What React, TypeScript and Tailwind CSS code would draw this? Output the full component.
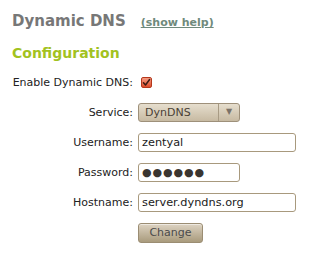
import React from "react";

const font = { fontFamily: '"DejaVu Sans", Verdana, sans-serif' };

function Label({ children }: { children: React.ReactNode }) {
  return (
    <div className="text-right text-[11px] leading-[19px] text-[#222] whitespace-nowrap">{children}</div>
  );
}

export default function App() {
  return (
    <div className="w-[334px] h-[275px] bg-white pt-[11px] pl-[12px]" style={font}>
      <div className="flex items-baseline">
        <h1 className="text-[15px] leading-[20px] font-bold text-[#777777]">Dynamic DNS</h1>
        <a className="ml-[15px] text-[11px] font-bold underline text-[#6f8a7c] cursor-pointer">(show help)</a>
      </div>
      <h2 className="mt-[12px] text-[14px] leading-[18px] font-bold text-[#a2c21f]">Configuration</h2>
      <div className="mt-[11px] grid grid-cols-[121px_auto] gap-x-[5px] gap-y-[11px] items-center">
        <Label>Enable Dynamic DNS:</Label>
        <div className="h-[19px] flex items-center">
          <span className="ml-[3px] w-[11px] h-[11px] rounded-[2px] border border-[#b5381c] bg-gradient-to-b from-[#f59a82] to-[#dc4a28] flex items-center justify-center">
            <svg width="9" height="9" viewBox="0 0 9 9">
              <path d="M1.5 4.8 L3.5 7 L7.6 1.5" fill="none" stroke="#3b1b12" strokeWidth="1.5" strokeLinecap="round" strokeLinejoin="round" />
            </svg>
          </span>
        </div>

        <Label>Service:</Label>
        <div className="w-[102px] h-[19px] rounded-[3px] border border-[#9e907a] bg-gradient-to-b from-[#e6dece] to-[#c7baa2] flex items-stretch">
          <div className="flex-1 pl-[6px] text-[11px] leading-[17px] text-[#4a4136]">DynDNS</div>
          <div className="w-[21px] border-l border-[#a89b84] flex items-center justify-center text-[8px] text-[#7a7268]">▼</div>
        </div>

        <Label>Username:</Label>
        <div className="w-[158px] h-[19px] rounded-[3px] border border-[#a8997d] bg-white pl-[3px] text-[11.3px] leading-[17px] text-[#1a1a1a]">zentyal</div>

        <Label>Password:</Label>
        <div className="w-[102px] h-[19px] rounded-[3px] border border-[#a8997d] bg-white pl-[3px] text-[11px] leading-[17px] text-[#3a3530] tracking-[0.9px]">●●●●●●</div>

        <Label>Hostname:</Label>
        <div className="w-[158px] h-[19px] rounded-[3px] border border-[#a8997d] bg-white pl-[3px] text-[11.3px] leading-[17px] text-[#1a1a1a]">server.dyndns.org</div>

        <div />
        <button className="w-[65px] h-[20px] rounded-[3px] border border-[#9b8d73] bg-gradient-to-b from-[#ddd3c2] to-[#a99b7d] text-[11px] leading-[18px] text-[#4b4b4b] shadow-[inset_0_1px_0_rgba(255,255,255,0.5)]">Change</button>
      </div>
    </div>
  );
}
